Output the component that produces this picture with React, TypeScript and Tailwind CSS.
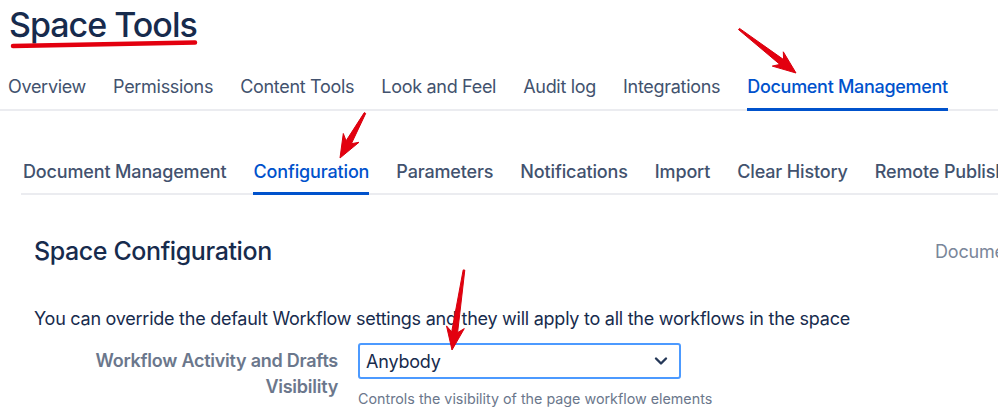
import React from "react";

const font = { fontFamily: "Inter, 'Liberation Sans', sans-serif" };

const topTabs = [
  "Overview",
  "Permissions",
  "Content Tools",
  "Look and Feel",
  "Audit log",
  "Integrations",
  "Document Management",
];

const subTabs = [
  "Document Management",
  "Configuration",
  "Parameters",
  "Notifications",
  "Import",
  "Clear History",
  "Remote Publishing",
];

// skitch-like arrow polygon from tail to tip
function arrowPoints(tx: number, ty: number, px: number, py: number) {
  const len = Math.hypot(px - tx, py - ty);
  const dx = (px - tx) / len;
  const dy = (py - ty) / len;
  const nx = -dy;
  const ny = dx;
  const head = 20;
  const bx = px - dx * head;
  const by = py - dy * head;
  const pts = [
    [tx + nx * 0.8, ty + ny * 0.8],
    [bx + nx * 3 + dx * 2, by + ny * 3 + dy * 2],
    [bx + nx * 9 - dx * 3, by + ny * 9 - dy * 3],
    [px, py],
    [bx - nx * 9 - dx * 3, by - ny * 9 - dy * 3],
    [bx - nx * 3 + dx * 2, by - ny * 3 + dy * 2],
    [tx - nx * 0.8, ty - ny * 0.8],
  ];
  return pts.map((p) => p.map((v) => v.toFixed(1)).join(",")).join(" ");
}

const Annotations: React.FC = () => (
  <svg
    className="absolute left-0 top-0 pointer-events-none"
    width={998}
    height={420}
    viewBox="0 0 998 420"
  >
    <path
      d="M13 46 Q100 44 195 42.5"
      stroke="#E3000F"
      strokeWidth={4.5}
      strokeLinecap="round"
      fill="none"
    />
    <polygon points={arrowPoints(739, 29, 796, 73)} fill="#E3000F" strokeLinejoin="round" stroke="#D9000D" strokeWidth={1} />
    <polygon points={arrowPoints(365, 113, 340, 158)} fill="#E3000F" strokeLinejoin="round" stroke="#D9000D" strokeWidth={1} />
    <polygon points={arrowPoints(464, 270, 452, 350)} fill="#E3000F" strokeLinejoin="round" stroke="#D9000D" strokeWidth={1} />
  </svg>
);

export default function App() {
  return (
    <div className="relative w-[998px] h-[420px] overflow-hidden bg-white" style={font}>
      <div className="pl-[9px] pt-[5px]">
        <h1 className="text-[34px] leading-[40px] font-medium text-[#172B4D] tracking-[-1px]">
          Space Tools
        </h1>
      </div>

      <div className="mt-[30px] flex gap-[27px] pl-[8px] border-b-2 border-[#EBECF0] whitespace-nowrap tracking-[-0.3px]">
        {topTabs.map((t, i) => {
          const active = i === topTabs.length - 1;
          return (
            <div
              key={t}
              className={
                active
                  ? "-mb-[2px] pb-[9px] border-b-[3px] border-[#0052CC] text-[18px] leading-[24px] font-medium text-[#0052CC]"
                  : "-mb-[2px] pb-[9px] border-b-[3px] border-transparent text-[18px] leading-[24px] text-[#42526E]"
              }
            >
              {t}
            </div>
          );
        })}
      </div>

      <div className="mt-[49px] ml-[21px] flex gap-[27px] pl-[2px] border-b-2 border-[#EBECF0] whitespace-nowrap tracking-[-0.15px]">
        {subTabs.map((t, i) => {
          const active = i === 1;
          return (
            <div
              key={t}
              className={
                active
                  ? "-mb-[2px] pb-[8px] border-b-[3px] border-[#0052CC] text-[18px] leading-[24px] font-medium text-[#0052CC]"
                  : "-mb-[2px] pb-[8px] border-b-[3px] border-transparent text-[18px] leading-[24px] font-medium text-[#42526E]"
              }
            >
              {t}
            </div>
          );
        })}
      </div>

      <div className="pl-[34px] pt-[40px]">
        <div className="flex items-center whitespace-nowrap">
          <h2 className="w-[901px] shrink-0 text-[25px] leading-[32px] font-medium text-[#172B4D] tracking-[-0.4px]">
            Space Configuration
          </h2>
          <span className="shrink-0 text-[18px] text-[#7A869A] tracking-[-0.2px]">Document Management</span>
        </div>

        <p className="mt-[40px] text-[18px] leading-[24px] text-[#172B4D] whitespace-nowrap tracking-[-0.25px]">
          You can override the default Workflow settings and they will apply to all the workflows in
          the space
        </p>

        <div className="mt-[12px] flex gap-[20px]">
          <label className="w-[304px] pt-[5px] text-right text-[18px] leading-[26px] font-semibold text-[#6B778C] tracking-[-0.25px]">
            Workflow Activity and Drafts
            <br />
            Visibility
          </label>
          <div>
            <div className="w-[323px] h-[36px] flex items-center justify-between pl-[6px] pr-[10px] border-2 border-[#4C9AFF] rounded-[3px] bg-white">
              <span className="text-[18px] text-[#172B4D] tracking-[-0.2px]">Anybody</span>
              <svg width="16" height="16" viewBox="0 0 16 16">
                <path
                  d="M3 5.5 L8 10.5 L13 5.5"
                  stroke="#253858"
                  strokeWidth={2.4}
                  fill="none"
                  strokeLinecap="round"
                  strokeLinejoin="round"
                />
              </svg>
            </div>
            <div className="mt-[11px] text-[14.3px] leading-[18px] text-[#6B778C] whitespace-nowrap">
              Controls the visibility of the page workflow elements
            </div>
          </div>
        </div>
      </div>

      <Annotations />
    </div>
  );
}
